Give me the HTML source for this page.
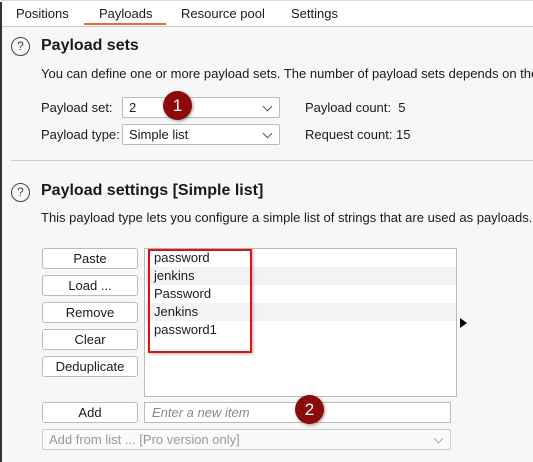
<!DOCTYPE html>
<html><head><style>
*{margin:0;padding:0;box-sizing:border-box}
html,body{width:533px;height:462px;overflow:hidden}
body{background:#f7f7f7;font-family:"Liberation Sans",sans-serif;font-size:13px;color:#1a1a1a;position:relative}
.a{position:absolute;white-space:nowrap}
.clip{position:absolute;overflow:hidden;white-space:nowrap;right:0}
.tabs{position:absolute;left:0;top:0;width:533px;height:27px;background:#fff;border-top:1px solid #ddd;border-bottom:1px solid #ccc}
.lb{position:absolute;left:0;top:2px;width:2px;height:460px;background:#333}
.help{position:absolute;width:19px;height:19px;border:1.3px solid #444;border-radius:50%;font-size:12px;text-align:center;line-height:17px;color:#444}
.h{font-weight:bold;font-size:16px}
.sel{position:absolute;background:#fff;border:1px solid #bbb;border-radius:2px;padding-left:6px;line-height:19px}
.chev{position:absolute;right:8px;top:5px;width:7px;height:7px;border-right:1px solid #555;border-bottom:1px solid #555;transform:rotate(45deg)}
.btn{position:absolute;left:42px;width:96px;height:21px;background:#fff;border:1px solid #bbb;border-radius:3px;text-align:center;line-height:19px}
.badge{position:absolute;width:29px;height:29px;border-radius:50%;background:#8b0a0a;color:#fff;text-align:center;line-height:29px;font-size:17px;box-shadow:1px 1px 3px rgba(0,0,0,.4)}
.row{position:absolute;left:1px;width:310px;height:18px;padding-left:8px;line-height:18px}
</style></head><body>
<div class="tabs"></div>
<div class="lb"></div>
<div class="a" style="left:16px;top:6px">Positions</div>
<div class="a" style="left:99px;top:6px">Payloads</div>
<div class="a" style="left:84px;top:23px;width:82px;height:2px;background:#f06a35"></div>
<div class="a" style="left:181px;top:6px">Resource pool</div>
<div class="a" style="left:291px;top:6px">Settings</div>

<div class="help" style="left:11px;top:37px">?</div>
<div class="a h" style="left:41px;top:37px">Payload sets</div>
<div class="clip" style="left:41px;top:66px">You can define one or more payload sets. The number of payload sets depends on the a</div>
<div class="a" style="left:41px;top:100px">Payload set:</div>
<div class="sel" style="left:122px;top:97px;width:158px;height:21px">2<div class="chev"></div></div>
<div class="a" style="left:305px;top:100px">Payload count:&nbsp; 5</div>
<div class="a" style="left:41px;top:127px">Payload type:</div>
<div class="sel" style="left:122px;top:124px;width:158px;height:21px">Simple list<div class="chev"></div></div>
<div class="a" style="left:305px;top:127px">Request count: 15</div>
<div class="badge" style="left:163px;top:91px">1</div>
<div class="a" style="left:11px;top:160px;width:522px;height:1px;background:#ccc"></div>

<div class="help" style="left:11px;top:183px">?</div>
<div class="a h" style="left:41px;top:182px">Payload settings [Simple list]</div>
<div class="clip" style="left:41px;top:210px">This payload type lets you configure a simple list of strings that are used as payloads.</div>

<div class="btn" style="top:248px">Paste</div>
<div class="btn" style="top:275px">Load ...</div>
<div class="btn" style="top:302px">Remove</div>
<div class="btn" style="top:329px">Clear</div>
<div class="btn" style="top:356px">Deduplicate</div>
<div class="a" style="left:144px;top:248px;width:313px;height:149px;background:#fff;border:1px solid #bbb">
<div class="row" style="top:0">password</div>
<div class="row" style="top:18px;background:#f3f3f3">jenkins</div>
<div class="row" style="top:36px">Password</div>
<div class="row" style="top:54px;background:#f3f3f3">Jenkins</div>
<div class="row" style="top:72px">password1</div>
</div>
<div class="a" style="left:148px;top:249px;width:104px;height:104px;border:2px solid #e0101a;box-shadow:1px 1px 3px rgba(0,0,0,.3)"></div>
<div class="a" style="left:460px;top:318px;width:0;height:0;border-left:7px solid #000;border-top:5px solid transparent;border-bottom:5px solid transparent"></div>

<div class="btn" style="top:402px">Add</div>
<div class="a" style="left:144px;top:402px;width:307px;height:21px;background:#fff;border:1px solid #bbb;padding-left:7px;line-height:19px;color:#888;font-style:italic">Enter a new item</div>
<div class="badge" style="left:295px;top:395px">2</div>
<div class="sel" style="left:42px;top:429px;width:409px;height:21px;color:#999;border-color:#ccc;background:#fafafa">Add from list ... [Pro version only]<div class="chev" style="border-color:#aaa"></div></div>
</body></html>
